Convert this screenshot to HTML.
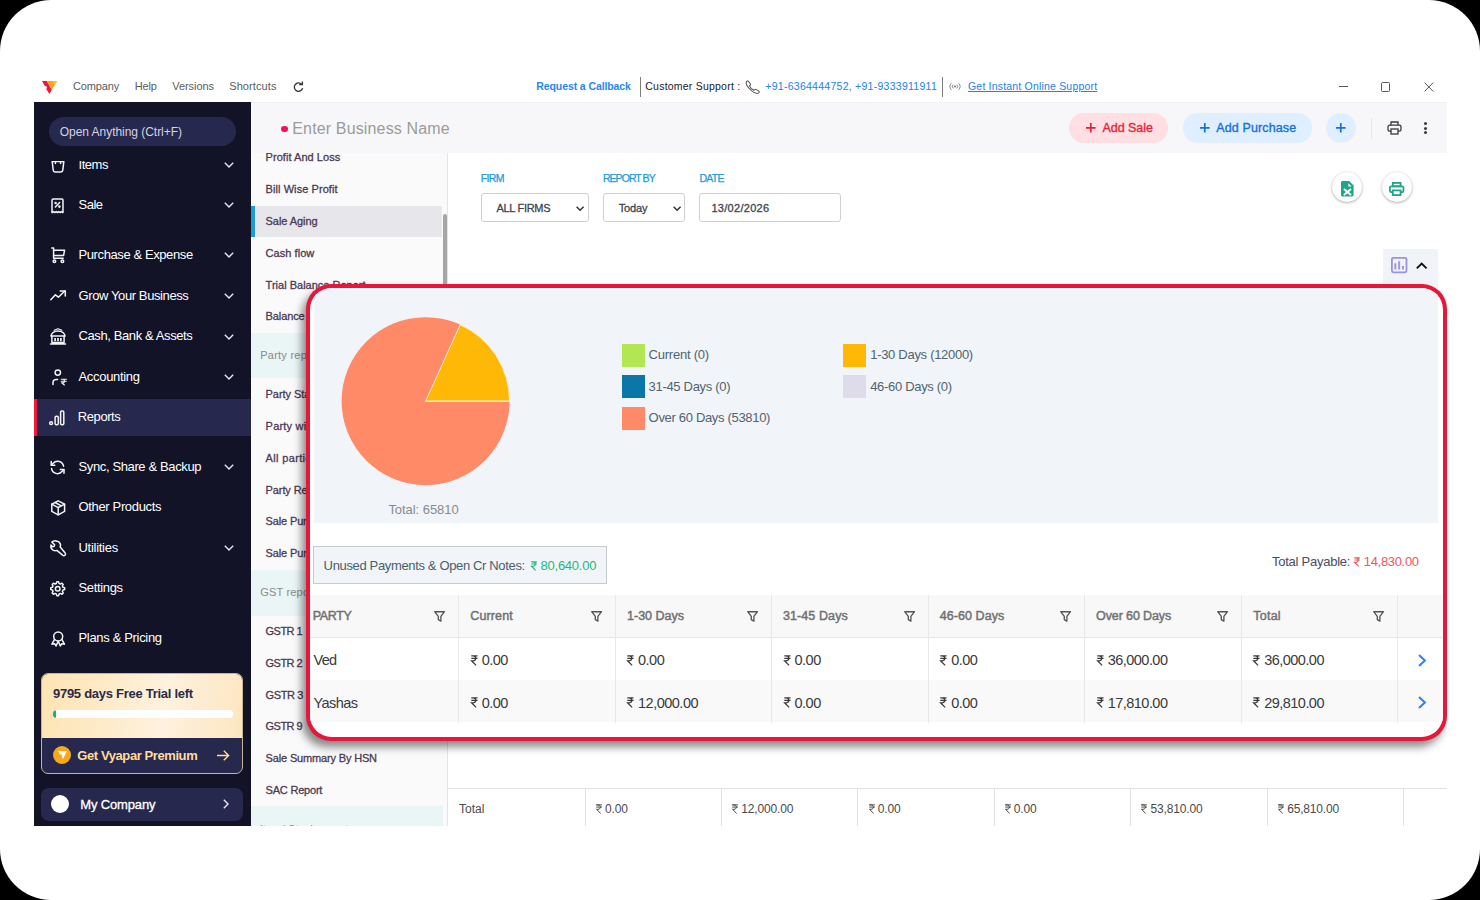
<!DOCTYPE html>
<html><head><meta charset="utf-8"><title>Sale Aging</title>
<style>
*{box-sizing:border-box;margin:0;padding:0}
html,body{width:1480px;height:900px;overflow:hidden;background:#000;font-family:"Liberation Sans",sans-serif;}
#frame{position:absolute;left:0;top:0;width:1480px;height:900px;background:#fff;border-radius:51px;overflow:hidden}
.abs{position:absolute}
.t{position:absolute;white-space:nowrap}
svg{overflow:visible}
</style></head><body>
<div id="frame">
<svg class="abs" style="left:42px;top:80.9px" width="15.1" height="13" viewBox="0 0 15.1 13">
<polygon points="0,0 4.8,0 9.9,8.8 7.5,12.95 4.3,8.3 5.05,5.86 2.85,5.1" fill="#ee1a3c"/>
<polygon points="4.8,0 15.07,0 9.9,8.8" fill="#f7a120"/>
<polygon points="10.6,0 15.07,0 12.4,4.6" fill="#fec516"/>
</svg>
<span class="t" style="left:72.90px;top:78.93px;font-size:11px;line-height:15px;font-weight:400;color:#5c5c5c;letter-spacing:-0.125px;">Company</span>
<span class="t" style="left:134.70px;top:78.93px;font-size:11px;line-height:15px;font-weight:400;color:#5c5c5c;letter-spacing:-0.181px;">Help</span>
<span class="t" style="left:172.30px;top:78.93px;font-size:11px;line-height:15px;font-weight:400;color:#5c5c5c;letter-spacing:-0.061px;">Versions</span>
<span class="t" style="left:229.20px;top:78.93px;font-size:11px;line-height:15px;font-weight:400;color:#5c5c5c;letter-spacing:0.104px;">Shortcuts</span>
<svg class="abs" style="left:293px;top:80.5px" width="11" height="12" viewBox="0 0 11 12" fill="none" stroke="#333" stroke-width="1.3">
<path d="M8.6 3.2A4.2 4.2 0 1 0 9.6 7.2"/><path d="M6.2 3.6H9.4V0.6" stroke-linejoin="miter"/></svg>
<span class="t" style="left:536.30px;top:78.92px;font-size:10.5px;line-height:15px;font-weight:700;color:#2688f0;letter-spacing:-0.099px;">Request a Callback</span>
<div class="abs" style="left:639.8px;top:77px;width:1.3px;height:20px;background:#7d7d7d"></div>
<span class="t" style="left:645.30px;top:78.92px;font-size:10.5px;line-height:15px;font-weight:400;color:#222;letter-spacing:0.220px;">Customer Support :</span>
<svg class="abs" style="left:745.4px;top:79.8px" width="15.6" height="14.4" viewBox="0 0 14 14" preserveAspectRatio="none" fill="none" stroke="#555" stroke-width=".95">
<path d="M1.2 1.8C1.6 1 2.6 .7 3.2 1.4L4.8 3.6C5.2 4.2 5 4.8 4.5 5.2L4 5.7C4.6 7.3 6.4 9.2 8 10L8.6 9.4C9.1 8.9 9.8 8.9 10.3 9.3L12.4 10.9C13 11.5 12.8 12.4 12.1 12.8C10.6 13.7 8.4 13 5.6 10.2C2.4 7 0.6 3.6 1.2 1.8Z"/></svg>
<span class="t" style="left:765.30px;top:78.92px;font-size:10.5px;line-height:15px;font-weight:400;color:#2381ea;letter-spacing:0.267px;">+91-6364444752, +91-9333911911</span>
<div class="abs" style="left:941.8px;top:77px;width:1.3px;height:20px;background:#7d7d7d"></div>
<svg class="abs" style="left:949px;top:82px" width="12" height="9" viewBox="0 0 12 9" fill="none" stroke="#666" stroke-width=".8">
<circle cx="6" cy="4.5" r=".9" fill="#666" stroke="none"/><path d="M4.2 2.6A2.7 2.7 0 0 0 4.2 6.4M7.8 2.6A2.7 2.7 0 0 1 7.8 6.4M2.4 1.2A4.8 4.8 0 0 0 2.4 7.8M9.6 1.2A4.8 4.8 0 0 1 9.6 7.8"/></svg>
<span class="t" style="left:968.00px;top:78.92px;font-size:10.5px;line-height:15px;font-weight:400;color:#2381ea;letter-spacing:0.191px;text-decoration:underline;">Get Instant Online Support</span>
<div class="abs" style="left:1338.5px;top:86px;width:9px;height:1.1px;background:#555"></div>
<div class="abs" style="left:1381px;top:82.2px;width:9.3px;height:9.6px;border:1.1px solid #555;border-radius:1.5px"></div>
<svg class="abs" style="left:1423.5px;top:82px" width="10" height="10" viewBox="0 0 10 10" stroke="#555" stroke-width="1"><path d="M.6 .6L9.2 9.4M9.2 .6L.6 9.4"/></svg>
<div class="abs" style="left:251px;top:102px;width:1196px;height:51px;background:#f7f7f9"></div>
<div class="abs" style="left:251px;top:102px;width:1196px;height:1px;background:#f1f1f4"></div>
<div class="abs" style="left:281.3px;top:125.8px;width:6.6px;height:6.6px;border-radius:50%;background:#f0145a"></div>
<span class="t" style="left:292.30px;top:118.28px;font-size:16px;line-height:22px;font-weight:400;color:#9b9b9b;letter-spacing:0.146px;">Enter Business Name</span>
<div class="abs" style="left:1069.1px;top:113.1px;width:99px;height:29.6px;border-radius:14.8px;background:#ffdfe2"></div>
<svg class="abs" style="left:1086.2px;top:123.1px" width="9.6" height="9.6" viewBox="0 0 9.6 9.6" stroke="#e81e3c" stroke-width="1.7"><path d="M4.8 0V9.6M0 4.8H9.6"/></svg>
<span class="t" style="left:1102.40px;top:118.94px;font-size:12.5px;line-height:18px;font-weight:400;color:#e81e3c;letter-spacing:-0.017px;-webkit-text-stroke:.35px #e81e3c;">Add Sale</span>
<div class="abs" style="left:1182.5px;top:113.1px;width:129.2px;height:29.6px;border-radius:14.8px;background:#e0efff"></div>
<svg class="abs" style="left:1200.2px;top:123.1px" width="9.6" height="9.6" viewBox="0 0 9.6 9.6" stroke="#1570e0" stroke-width="1.7"><path d="M4.8 0V9.6M0 4.8H9.6"/></svg>
<span class="t" style="left:1216.30px;top:118.94px;font-size:12.5px;line-height:18px;font-weight:400;color:#1570e0;letter-spacing:0.115px;-webkit-text-stroke:.35px #1570e0;">Add Purchase</span>
<div class="abs" style="left:1326px;top:113px;width:30px;height:30px;border-radius:50%;background:#e0efff"></div>
<svg class="abs" style="left:1336.2px;top:123.1px" width="9.6" height="9.6" viewBox="0 0 9.6 9.6" stroke="#1570e0" stroke-width="1.7"><path d="M4.8 0V9.6M0 4.8H9.6"/></svg>
<div class="abs" style="left:1370.5px;top:118px;width:1px;height:21px;background:#e6e6ea"></div>
<svg class="abs" style="left:1387px;top:120.5px" width="15" height="14" viewBox="0 0 15 14" fill="none" stroke="#3a3a3a" stroke-width="1.3">
<path d="M4 4.2V1H11V4.2"/><rect x="1" y="4.2" width="13" height="6" rx="1.6"/><rect x="4" y="8" width="7" height="5" fill="#f7f7f9"/></svg>
<div class="abs" style="left:1424.3px;top:121.9px;width:3.1px;height:3.1px;border-radius:50%;background:#3a3a3a"></div>
<div class="abs" style="left:1424.3px;top:126.6px;width:3.1px;height:3.1px;border-radius:50%;background:#3a3a3a"></div>
<div class="abs" style="left:1424.3px;top:131.3px;width:3.1px;height:3.1px;border-radius:50%;background:#3a3a3a"></div>
<div class="abs" style="left:34px;top:102px;width:217px;height:724px;background:#131327"></div>
<div class="abs" style="left:49px;top:117px;width:187px;height:29px;border-radius:14.5px;background:#27284d"></div>
<span class="t" style="left:59.80px;top:123.74px;font-size:12px;line-height:17px;font-weight:400;color:#d4d4e2;letter-spacing:-0.042px;">Open Anything (Ctrl+F)</span>
<div class="abs" style="left:34px;top:160.6px;width:217px;height:500px;overflow:hidden"><div class="abs" style="left:-34px;top:-160.6px;width:300px;height:700px">
<div class="abs" style="left:34px;top:399px;width:217px;height:36.8px;background:#27284d"></div>
<div class="abs" style="left:34px;top:399px;width:3px;height:36.8px;background:#ed1a3b"></div>
<span class="t" style="left:78.50px;top:155.95px;font-size:13px;line-height:18px;font-weight:400;color:#ffffff;letter-spacing:-0.457px;">Items</span>
<svg class="abs" style="left:224px;top:162.30px" width="10" height="6" viewBox="0 0 10 6" fill="none" stroke="#e8e8f0" stroke-width="1.4"><path d="M.8 .7L5 4.9L9.2 .7"/></svg>
<span class="t" style="left:78.50px;top:195.75px;font-size:13px;line-height:18px;font-weight:400;color:#ffffff;letter-spacing:-0.505px;">Sale</span>
<svg class="abs" style="left:224px;top:202.10px" width="10" height="6" viewBox="0 0 10 6" fill="none" stroke="#e8e8f0" stroke-width="1.4"><path d="M.8 .7L5 4.9L9.2 .7"/></svg>
<span class="t" style="left:78.50px;top:246.05px;font-size:13px;line-height:18px;font-weight:400;color:#ffffff;letter-spacing:-0.400px;">Purchase &amp; Expense</span>
<svg class="abs" style="left:224px;top:252.40px" width="10" height="6" viewBox="0 0 10 6" fill="none" stroke="#e8e8f0" stroke-width="1.4"><path d="M.8 .7L5 4.9L9.2 .7"/></svg>
<span class="t" style="left:78.50px;top:286.85px;font-size:13px;line-height:18px;font-weight:400;color:#ffffff;letter-spacing:-0.394px;">Grow Your Business</span>
<svg class="abs" style="left:224px;top:293.20px" width="10" height="6" viewBox="0 0 10 6" fill="none" stroke="#e8e8f0" stroke-width="1.4"><path d="M.8 .7L5 4.9L9.2 .7"/></svg>
<span class="t" style="left:78.50px;top:327.15px;font-size:13px;line-height:18px;font-weight:400;color:#ffffff;letter-spacing:-0.395px;">Cash, Bank &amp; Assets</span>
<svg class="abs" style="left:224px;top:333.50px" width="10" height="6" viewBox="0 0 10 6" fill="none" stroke="#e8e8f0" stroke-width="1.4"><path d="M.8 .7L5 4.9L9.2 .7"/></svg>
<span class="t" style="left:78.50px;top:367.75px;font-size:13px;line-height:18px;font-weight:400;color:#ffffff;letter-spacing:-0.312px;">Accounting</span>
<svg class="abs" style="left:224px;top:374.10px" width="10" height="6" viewBox="0 0 10 6" fill="none" stroke="#e8e8f0" stroke-width="1.4"><path d="M.8 .7L5 4.9L9.2 .7"/></svg>
<span class="t" style="left:77.80px;top:408.15px;font-size:13px;line-height:18px;font-weight:400;color:#ffffff;letter-spacing:-0.417px;">Reports</span>
<span class="t" style="left:78.50px;top:457.65px;font-size:13px;line-height:18px;font-weight:400;color:#ffffff;letter-spacing:-0.373px;">Sync, Share &amp; Backup</span>
<svg class="abs" style="left:224px;top:464.00px" width="10" height="6" viewBox="0 0 10 6" fill="none" stroke="#e8e8f0" stroke-width="1.4"><path d="M.8 .7L5 4.9L9.2 .7"/></svg>
<span class="t" style="left:78.50px;top:498.15px;font-size:13px;line-height:18px;font-weight:400;color:#ffffff;letter-spacing:-0.345px;">Other Products</span>
<span class="t" style="left:78.50px;top:538.85px;font-size:13px;line-height:18px;font-weight:400;color:#ffffff;letter-spacing:-0.277px;">Utilities</span>
<svg class="abs" style="left:224px;top:545.20px" width="10" height="6" viewBox="0 0 10 6" fill="none" stroke="#e8e8f0" stroke-width="1.4"><path d="M.8 .7L5 4.9L9.2 .7"/></svg>
<span class="t" style="left:78.50px;top:579.15px;font-size:13px;line-height:18px;font-weight:400;color:#ffffff;letter-spacing:-0.347px;">Settings</span>
<span class="t" style="left:78.50px;top:629.45px;font-size:13px;line-height:18px;font-weight:400;color:#ffffff;letter-spacing:-0.330px;">Plans &amp; Pricing</span>
<svg class="abs" style="left:50.9px;top:159px" width="14" height="14" viewBox="0 0 14 14" fill="none" stroke="#f4f4f8" stroke-width="1.5" stroke-linejoin="round" stroke-linecap="round"><path d="M1.2 2.6H12.8L11.8 11.2C11.7 12.2 11 12.9 10 12.9H4C3 12.9 2.3 12.2 2.2 11.2Z"/><path d="M4.4 2.6V4.4M9.6 2.6V4.4"/></svg>
<svg class="abs" style="left:51.3px;top:197.6px" width="13" height="16" viewBox="0 0 13 16" fill="none" stroke="#f4f4f8" stroke-width="1.5" stroke-linejoin="round" stroke-linecap="round"><path d="M1 14.6V2.2C1 1.5 1.5 1 2.2 1H10.8C11.5 1 12 1.5 12 2.2V14.6L10.6 13.6L9.2 14.6L7.8 13.6L6.5 14.6L5.2 13.6L3.8 14.6L2.4 13.6Z"/><path d="M4.4 9L8.6 4.6" /><circle cx="4.6" cy="5" r=".55" fill="#f4f4f8"/><circle cx="8.4" cy="8.6" r=".55" fill="#f4f4f8"/></svg>
<svg class="abs" style="left:50.6px;top:246.6px" width="15" height="16.5" viewBox="0 0 15 16.5" fill="none" stroke="#f4f4f8" stroke-width="1.5" stroke-linejoin="round" stroke-linecap="round"><path d="M.8 .9H2.6V11.2H12.2"/><path d="M2.6 3.2H13.6L12.6 8.4H2.6"/><circle cx="3.4" cy="14.2" r="1.3"/><circle cx="11.4" cy="14.2" r="1.3"/></svg>
<svg class="abs" style="left:50px;top:290.2px" width="16.2" height="10.5" viewBox="0 0 16.2 10.5" fill="none" stroke="#f4f4f8" stroke-width="1.5" stroke-linejoin="round" stroke-linecap="round"><path d="M.8 9.7L5.4 4.8L8.4 7.2L14.8 1"/><path d="M10.2 .9H15.3V6"/></svg>
<svg class="abs" style="left:50px;top:327.6px" width="16" height="16.5" viewBox="0 0 16 16.5" fill="none" stroke="#f4f4f8" stroke-width="1.5" stroke-linejoin="round" stroke-linecap="round"><path d="M4.2 2.3L8 .8L11.8 2.3" stroke-width="1.2"/><path d="M.9 8.1C1.4 5 4.4 2.9 8 2.9C11.6 2.9 14.6 5 15.1 8.1Z"/><path d="M1.9 8.3V14.5H14.1V8.3M.5 16H15.5"/><path d="M5.1 10V13.2M8 10V13.2M10.9 10V13.2" stroke-width="1.7" stroke-linecap="butt"/></svg>
<svg class="abs" style="left:52px;top:368.6px" width="15" height="16.5" viewBox="0 0 15 16.5" fill="none" stroke="#f4f4f8" stroke-width="1.5" stroke-linejoin="round" stroke-linecap="round"><circle cx="5.8" cy="3.6" r="2.7"/><path d="M1 15.4V13.6C1 11.8 2.4 10.6 4.4 10.6H5.6"/><path d="M9.2 10.2H14.4M9.2 12.2H14.4M9.2 10.2H10.8C12.1 10.2 12.5 11.2 12.5 12.2C12.5 13.2 11.8 13.8 10.8 13.8H9.6L12.4 16" stroke-width="1.15"/></svg>
<svg class="abs" style="left:49.4px;top:409.6px" width="16" height="16" viewBox="0 0 16 16" fill="none" stroke="#f4f4f8" stroke-width="1.5" stroke-linejoin="round" stroke-linecap="round"><circle cx="2.1" cy="13.2" r="1.4"/><rect x="6.1" y="6.2" width="3.2" height="8.6" rx="1.2"/><rect x="11.6" y="1" width="3.2" height="13.8" rx="1.2"/></svg>
<svg class="abs" style="left:50.4px;top:459.6px" width="15.2" height="14.8" viewBox="0 0 15.2 14.8" fill="none" stroke="#f4f4f8" stroke-width="1.5" stroke-linejoin="round" stroke-linecap="round"><path d="M13.6 6.2A6 6 0 0 0 3.2 3.2L1.4 5M1.6 8.6A6 6 0 0 0 12 11.6L13.8 9.8"/><path d="M1.2 1.6V5.2H4.8M14 13.2V9.6H10.4"/></svg>
<svg class="abs" style="left:50.8px;top:500px" width="14.4" height="15.6" viewBox="0 0 14.4 15.6" fill="none" stroke="#f4f4f8" stroke-width="1.5" stroke-linejoin="round" stroke-linecap="round"><path d="M7.2 .8L13.6 4.2V11.4L7.2 14.8L.8 11.4V4.2Z"/><path d="M.8 4.2L7.2 7.6L13.6 4.2M7.2 7.6V14.8M4 2.5L10.4 5.9"/></svg>
<svg class="abs" style="left:49.8px;top:540px" width="16.4" height="16.4" viewBox="0 0 16.4 16.4" fill="none" stroke="#f4f4f8" stroke-width="1.5" stroke-linejoin="round" stroke-linecap="round"><path d="M7.2 1.2C5.4 .4 3.2 .8 1.9 2.1L4.6 4.8L4.2 6.4L2.6 6.8L.9 5.1C.5 6.9 1 8.4 2.1 9.5C3.4 10.8 5.2 11 6.8 10.4L12.6 15.2C13.4 15.9 14.4 15.8 15 15.2C15.6 14.6 15.7 13.6 15 12.8L10.2 7C10.8 5.4 10.4 3.4 9.2 2.2C8.6 1.7 7.9 1.4 7.2 1.2Z"/></svg>
<svg class="abs" style="left:50.2px;top:581.2px" width="15.4" height="15.4" viewBox="0 0 15.4 15.4" fill="none" stroke="#f4f4f8" stroke-width="1.5" stroke-linejoin="round" stroke-linecap="round"><polygon points="6.82,0.76 8.58,0.76 9.12,2.49 10.38,3.01 11.99,2.17 13.23,3.41 12.39,5.02 12.91,6.28 14.64,6.82 14.64,8.58 12.91,9.12 12.39,10.38 13.23,11.99 11.99,13.23 10.38,12.39 9.12,12.91 8.58,14.64 6.82,14.64 6.28,12.91 5.02,12.39 3.41,13.23 2.17,11.99 3.01,10.38 2.49,9.12 0.76,8.58 0.76,6.82 2.49,6.28 3.01,5.02 2.17,3.41 3.41,2.17 5.02,3.01 6.28,2.49"/><circle cx="7.7" cy="7.7" r="2.3"/></svg>
<svg class="abs" style="left:50.8px;top:630.6px" width="14.4" height="15.6" viewBox="0 0 14.4 15.6" fill="none" stroke="#f4f4f8" stroke-width="1.5" stroke-linejoin="round" stroke-linecap="round"><circle cx="7.2" cy="5.4" r="4.5"/><path d="M3.6 8.4L.9 13.2L3.8 12.8L5 15L7.2 10.4M10.8 8.4L13.5 13.2L10.6 12.8L9.4 15L7.2 10.4"/></svg>
</div></div>
<div class="abs" style="left:40.9px;top:673.3px;width:202.4px;height:101px;border-radius:7px;background:#27284d;overflow:hidden;border:1px solid #c9b68e"><div class="abs" style="left:-1px;top:-1px;width:203px;height:64.3px;background:linear-gradient(100deg,#fde4b2 0%,#fdeac6 30%,#fef1de 60%,#fde6c0 100%)"></div></div>
<span class="t" style="left:53.00px;top:685.25px;font-size:13px;line-height:18px;font-weight:700;color:#2a2a48;letter-spacing:-0.276px;">9795 days Free Trial left</span>
<div class="abs" style="left:52.5px;top:710.4px;width:180px;height:7.2px;border-radius:3.6px;background:#fff;overflow:hidden"><div class="abs" style="left:0;top:0;width:3.6px;height:7.2px;border-radius:1.8px;background:#18b368"></div></div>
<div class="abs" style="left:53px;top:746px;width:18px;height:18px;border-radius:50%;background:#f7a81c"></div>
<svg class="abs" style="left:57.6px;top:751.4px" width="9" height="8" viewBox="0 0 9 8"><polygon points="0,0 9,0 5,8 3.6,5.2 4.6,3.6 2,3.4" fill="#fff"/></svg>
<span class="t" style="left:77.30px;top:747.05px;font-size:13px;line-height:18px;font-weight:700;color:#ffdc9c;letter-spacing:-0.411px;">Get Vyapar Premium</span>
<svg class="abs" style="left:216.5px;top:749.6px" width="12.5" height="11" viewBox="0 0 12.5 11" fill="none" stroke="#ffdc9c" stroke-width="1.4"><path d="M0 5.5H11.5M6.8 .8L11.6 5.5L6.8 10.2"/></svg>
<div class="abs" style="left:41.1px;top:787.8px;width:202.2px;height:33.2px;border-radius:8px;background:#27284d"></div>
<div class="abs" style="left:51.2px;top:795.4px;width:18px;height:18px;border-radius:50%;background:#fff"></div>
<span class="t" style="left:80.30px;top:795.95px;font-size:13px;line-height:18px;font-weight:400;color:#fff;letter-spacing:-0.158px;-webkit-text-stroke:.3px #fff;">My Company</span>
<svg class="abs" style="left:223px;top:799.4px" width="6" height="10" viewBox="0 0 6 10" fill="none" stroke="#e8e8f0" stroke-width="1.4"><path d="M.8 .8L5 5L.8 9.2"/></svg>
<div class="abs" style="left:251px;top:153px;width:196.5px;height:673px;background:#fafafa;overflow:hidden">
<div class="abs" style="left:-251px;top:-153px;width:600px;height:900px">
<div class="abs" style="left:251px;top:206px;width:191.3px;height:31.4px;background:#e6e6eb"></div>
<div class="abs" style="left:251px;top:206px;width:3.8px;height:31.4px;background:#1e9ad6"></div>
<div class="abs" style="left:251px;top:332.7px;width:192px;height:45.7px;background:#eaf5f5"></div>
<div class="abs" style="left:251px;top:569.5px;width:192px;height:46.1px;background:#eaf5f5"></div>
<div class="abs" style="left:251px;top:806.2px;width:192px;height:23.8px;background:#eaf5f5"></div>
<span class="t" style="left:265.60px;top:150.33px;font-size:11px;line-height:15px;font-weight:400;color:#4b3a52;letter-spacing:0.047px;-webkit-text-stroke:.3px #4b3a52;">Profit And Loss</span>
<span class="t" style="left:265.60px;top:182.43px;font-size:11px;line-height:15px;font-weight:400;color:#4b3a52;letter-spacing:0.069px;-webkit-text-stroke:.3px #4b3a52;">Bill Wise Profit</span>
<span class="t" style="left:265.60px;top:214.23px;font-size:11px;line-height:15px;font-weight:400;color:#4b3a52;letter-spacing:-0.061px;-webkit-text-stroke:.3px #4b3a52;">Sale Aging</span>
<span class="t" style="left:265.60px;top:246.03px;font-size:11px;line-height:15px;font-weight:400;color:#4b3a52;letter-spacing:0.045px;-webkit-text-stroke:.3px #4b3a52;">Cash flow</span>
<span class="t" style="left:265.60px;top:277.73px;font-size:11px;line-height:15px;font-weight:400;color:#4b3a52;letter-spacing:0.007px;-webkit-text-stroke:.3px #4b3a52;">Trial Balance Report</span>
<span class="t" style="left:265.60px;top:309.03px;font-size:11px;line-height:15px;font-weight:400;color:#4b3a52;letter-spacing:-0.120px;-webkit-text-stroke:.3px #4b3a52;">Balance Sheet</span>
<span class="t" style="left:265.60px;top:387.33px;font-size:11px;line-height:15px;font-weight:400;color:#4b3a52;letter-spacing:-0.058px;-webkit-text-stroke:.3px #4b3a52;">Party Statement</span>
<span class="t" style="left:265.60px;top:419.03px;font-size:11px;line-height:15px;font-weight:400;color:#4b3a52;letter-spacing:0.202px;-webkit-text-stroke:.3px #4b3a52;">Party wise Profit &amp; Loss</span>
<span class="t" style="left:265.60px;top:450.83px;font-size:11px;line-height:15px;font-weight:400;color:#4b3a52;letter-spacing:0.337px;-webkit-text-stroke:.3px #4b3a52;">All parties</span>
<span class="t" style="left:265.60px;top:482.63px;font-size:11px;line-height:15px;font-weight:400;color:#4b3a52;letter-spacing:-0.104px;-webkit-text-stroke:.3px #4b3a52;">Party Report By Item</span>
<span class="t" style="left:265.60px;top:514.03px;font-size:11px;line-height:15px;font-weight:400;color:#4b3a52;letter-spacing:-0.144px;-webkit-text-stroke:.3px #4b3a52;">Sale Purchase By Party</span>
<span class="t" style="left:265.60px;top:545.83px;font-size:11px;line-height:15px;font-weight:400;color:#4b3a52;letter-spacing:-0.136px;-webkit-text-stroke:.3px #4b3a52;">Sale Purchase By Party Group</span>
<span class="t" style="left:265.60px;top:624.23px;font-size:11px;line-height:15px;font-weight:400;color:#4b3a52;letter-spacing:-0.538px;-webkit-text-stroke:.3px #4b3a52;">GSTR 1</span>
<span class="t" style="left:265.60px;top:656.03px;font-size:11px;line-height:15px;font-weight:400;color:#4b3a52;letter-spacing:-0.538px;-webkit-text-stroke:.3px #4b3a52;">GSTR 2</span>
<span class="t" style="left:265.60px;top:687.73px;font-size:11px;line-height:15px;font-weight:400;color:#4b3a52;letter-spacing:-0.390px;-webkit-text-stroke:.3px #4b3a52;">GSTR 3 B</span>
<span class="t" style="left:265.60px;top:719.23px;font-size:11px;line-height:15px;font-weight:400;color:#4b3a52;letter-spacing:-0.538px;-webkit-text-stroke:.3px #4b3a52;">GSTR 9</span>
<span class="t" style="left:265.60px;top:751.03px;font-size:11px;line-height:15px;font-weight:400;color:#4b3a52;letter-spacing:-0.158px;-webkit-text-stroke:.3px #4b3a52;">Sale Summary By HSN</span>
<span class="t" style="left:265.60px;top:782.73px;font-size:11px;line-height:15px;font-weight:400;color:#4b3a52;letter-spacing:-0.209px;-webkit-text-stroke:.3px #4b3a52;">SAC Report</span>
<span class="t" style="left:260.20px;top:347.63px;font-size:11px;line-height:15px;font-weight:400;color:#8a8a8a;letter-spacing:0.253px;">Party report</span>
<span class="t" style="left:260.20px;top:584.83px;font-size:11px;line-height:15px;font-weight:400;color:#8a8a8a;letter-spacing:0.191px;">GST reports</span>
<span class="t" style="left:260.20px;top:822.13px;font-size:11px;line-height:15px;font-weight:400;color:#8a8a8a;letter-spacing:0.066px;">Item/ Stock report</span>
</div></div>
<div class="abs" style="left:447.3px;top:153px;width:1px;height:673px;background:#e4e4e8"></div>
<div class="abs" style="left:442.6px;top:214px;width:4.9px;height:330px;border-radius:2.4px;background:#a6a6a6"></div>
<span class="t" style="left:480.70px;top:171.02px;font-size:10.5px;line-height:15px;font-weight:400;color:#1e9ad6;letter-spacing:-0.615px;-webkit-text-stroke:.25px #1e9ad6;">FIRM</span>
<span class="t" style="left:602.90px;top:171.02px;font-size:10.5px;line-height:15px;font-weight:400;color:#1e9ad6;letter-spacing:-0.943px;-webkit-text-stroke:.25px #1e9ad6;">REPORT BY</span>
<span class="t" style="left:699.50px;top:171.02px;font-size:10.5px;line-height:15px;font-weight:400;color:#1e9ad6;letter-spacing:-0.781px;-webkit-text-stroke:.25px #1e9ad6;">DATE</span>
<div class="abs" style="left:481px;top:193px;width:107.6px;height:28.6px;border:1px solid #cfcfd4;border-radius:3px;background:#fff"></div>
<div class="abs" style="left:603.2px;top:193px;width:82.3px;height:28.6px;border:1px solid #cfcfd4;border-radius:3px;background:#fff"></div>
<div class="abs" style="left:699.2px;top:193px;width:141.5px;height:28.6px;border:1px solid #cfcfd4;border-radius:3px;background:#fff"></div>
<span class="t" style="left:496.50px;top:201.13px;font-size:11px;line-height:15px;font-weight:400;color:#3c4650;letter-spacing:-0.305px;-webkit-text-stroke:.3px #3c4650;">ALL FIRMS</span>
<span class="t" style="left:618.70px;top:201.13px;font-size:11px;line-height:15px;font-weight:400;color:#3c4650;letter-spacing:-0.111px;-webkit-text-stroke:.3px #3c4650;">Today</span>
<span class="t" style="left:711.40px;top:200.73px;font-size:11px;line-height:15px;font-weight:400;color:#3c4650;letter-spacing:0.295px;-webkit-text-stroke:.3px #3c4650;">13/02/2026</span>
<svg class="abs" style="left:576.1px;top:205.6px" width="8.2" height="5.4" viewBox="0 0 8.2 5.4" fill="none" stroke="#333" stroke-width="1.5"><path d="M.6 .7L4.1 4.2L7.6 .7"/></svg>
<svg class="abs" style="left:672.8px;top:205.6px" width="8.2" height="5.4" viewBox="0 0 8.2 5.4" fill="none" stroke="#333" stroke-width="1.5"><path d="M.6 .7L4.1 4.2L7.6 .7"/></svg>
<div class="abs" style="left:1331.8px;top:171.8px;width:30.6px;height:30.6px;border-radius:50%;background:#fff;box-shadow:0 1px 3px rgba(0,0,0,.3),0 0 1px rgba(0,0,0,.12)"></div>
<div class="abs" style="left:1381.7px;top:171.8px;width:30.6px;height:30.6px;border-radius:50%;background:#fff;box-shadow:0 1px 3px rgba(0,0,0,.3),0 0 1px rgba(0,0,0,.12)"></div>
<svg class="abs" style="left:1341px;top:180.7px" width="12.6" height="15.6" viewBox="0 0 12.6 15.6"><path d="M1.5 0H8.2L12.6 4.4V14.1C12.6 14.9 11.9 15.6 11.1 15.6H1.5C.7 15.6 0 14.9 0 14.1V1.5C0 .7 .7 0 1.5 0Z" fill="#1fa58a"/><path d="M7.4 2.2V5.4H10.6Z" fill="#fff"/><path d="M2.9 7.9L10 14M10 7.9L2.9 14" stroke="#fff" stroke-width="2" fill="none"/></svg>
<svg class="abs" style="left:1389.2px;top:181.7px" width="15.4" height="14" viewBox="0 0 15.4 14" fill="none" stroke="#1fa58a" stroke-width="1.8"><rect x="3.8" y=".9" width="7.8" height="3.4"/><rect x=".9" y="4.3" width="13.6" height="5.9" rx="1.4"/><rect x="3.8" y="8.4" width="7.8" height="4.7" fill="#fff"/></svg>
<div class="abs" style="left:1383.1px;top:248.8px;width:55.3px;height:40px;background:#f0f4f8"></div>
<svg class="abs" style="left:1391.2px;top:257.1px" width="16.4" height="16.4" viewBox="0 0 16.4 16.4" fill="none" stroke="#9a93de" stroke-width="1.8"><rect x=".9" y=".9" width="14.6" height="14.4" rx="1.6"/><path d="M4.4 6.2V12.6M8.2 4.2V12.6M12 9V12.6" stroke-width="1.9"/></svg>
<svg class="abs" style="left:1416px;top:262px" width="11.4" height="7.4" viewBox="0 0 11.4 7.4" fill="none" stroke="#111" stroke-width="1.9"><path d="M.8 6.4L5.7 1.5L10.6 6.4"/></svg>
<div class="abs" style="left:448px;top:788.2px;width:999px;height:1px;background:#e2e2e4"></div>
<div class="abs" style="left:584.8px;top:788.2px;width:1px;height:38px;background:#e2e2e4"></div>
<div class="abs" style="left:721px;top:788.2px;width:1px;height:38px;background:#e2e2e4"></div>
<div class="abs" style="left:856.8px;top:788.2px;width:1px;height:38px;background:#e2e2e4"></div>
<div class="abs" style="left:993.5px;top:788.2px;width:1px;height:38px;background:#e2e2e4"></div>
<div class="abs" style="left:1129.9px;top:788.2px;width:1px;height:38px;background:#e2e2e4"></div>
<div class="abs" style="left:1266.6px;top:788.2px;width:1px;height:38px;background:#e2e2e4"></div>
<div class="abs" style="left:1402.9px;top:788.2px;width:1px;height:38px;background:#e2e2e4"></div>
<span class="t" style="left:458.90px;top:801.04px;font-size:12px;line-height:17px;font-weight:400;color:#4a4a4a;letter-spacing:0.070px;">Total</span>
<svg class="abs" style="left:595.90px;top:803.87px" width="6.10" height="10.05" viewBox="0.4 0.5 8.8 13.4" fill="none" stroke="#4a4a4a" stroke-width="1.43983" stroke-linecap="butt" stroke-linejoin="miter"><path d="M0.8 1.2H9M0.8 4.4H9M0.8 1.2H3.4C5.6 1.2 6.7 2.7 6.7 4.4C6.7 6.2 5.5 7.6 3.4 7.6H1.1L7.2 13.6"/></svg><span class="t" style="left:605.04px;top:801.04px;font-size:12px;line-height:17px;font-weight:400;color:#4a4a4a;letter-spacing:-0.175px;">0.00</span>
<svg class="abs" style="left:732.10px;top:803.87px" width="6.10" height="10.05" viewBox="0.4 0.5 8.8 13.4" fill="none" stroke="#4a4a4a" stroke-width="1.43983" stroke-linecap="butt" stroke-linejoin="miter"><path d="M0.8 1.2H9M0.8 4.4H9M0.8 1.2H3.4C5.6 1.2 6.7 2.7 6.7 4.4C6.7 6.2 5.5 7.6 3.4 7.6H1.1L7.2 13.6"/></svg><span class="t" style="left:741.24px;top:801.04px;font-size:12px;line-height:17px;font-weight:400;color:#4a4a4a;letter-spacing:-0.136px;">12,000.00</span>
<svg class="abs" style="left:868.70px;top:803.87px" width="6.10" height="10.05" viewBox="0.4 0.5 8.8 13.4" fill="none" stroke="#4a4a4a" stroke-width="1.43983" stroke-linecap="butt" stroke-linejoin="miter"><path d="M0.8 1.2H9M0.8 4.4H9M0.8 1.2H3.4C5.6 1.2 6.7 2.7 6.7 4.4C6.7 6.2 5.5 7.6 3.4 7.6H1.1L7.2 13.6"/></svg><span class="t" style="left:877.84px;top:801.04px;font-size:12px;line-height:17px;font-weight:400;color:#4a4a4a;letter-spacing:-0.175px;">0.00</span>
<svg class="abs" style="left:1004.60px;top:803.87px" width="6.10" height="10.05" viewBox="0.4 0.5 8.8 13.4" fill="none" stroke="#4a4a4a" stroke-width="1.43983" stroke-linecap="butt" stroke-linejoin="miter"><path d="M0.8 1.2H9M0.8 4.4H9M0.8 1.2H3.4C5.6 1.2 6.7 2.7 6.7 4.4C6.7 6.2 5.5 7.6 3.4 7.6H1.1L7.2 13.6"/></svg><span class="t" style="left:1013.74px;top:801.04px;font-size:12px;line-height:17px;font-weight:400;color:#4a4a4a;letter-spacing:-0.175px;">0.00</span>
<svg class="abs" style="left:1141.30px;top:803.87px" width="6.10" height="10.05" viewBox="0.4 0.5 8.8 13.4" fill="none" stroke="#4a4a4a" stroke-width="1.43983" stroke-linecap="butt" stroke-linejoin="miter"><path d="M0.8 1.2H9M0.8 4.4H9M0.8 1.2H3.4C5.6 1.2 6.7 2.7 6.7 4.4C6.7 6.2 5.5 7.6 3.4 7.6H1.1L7.2 13.6"/></svg><span class="t" style="left:1150.44px;top:801.04px;font-size:12px;line-height:17px;font-weight:400;color:#4a4a4a;letter-spacing:-0.148px;">53,810.00</span>
<svg class="abs" style="left:1278.00px;top:803.87px" width="6.10" height="10.05" viewBox="0.4 0.5 8.8 13.4" fill="none" stroke="#4a4a4a" stroke-width="1.43983" stroke-linecap="butt" stroke-linejoin="miter"><path d="M0.8 1.2H9M0.8 4.4H9M0.8 1.2H3.4C5.6 1.2 6.7 2.7 6.7 4.4C6.7 6.2 5.5 7.6 3.4 7.6H1.1L7.2 13.6"/></svg><span class="t" style="left:1287.14px;top:801.04px;font-size:12px;line-height:17px;font-weight:400;color:#4a4a4a;letter-spacing:-0.170px;">65,810.00</span>
<div class="abs" style="left:0;top:0;width:1447px;height:900px;overflow:hidden"><div class="abs" style="left:306px;top:284.4px;width:1141px;height:456.2px;border-radius:25px;background:#e8173a;box-shadow:-4px 6px 8px rgba(0,0,0,.46)"></div></div>
<div class="abs" style="left:309.6px;top:288px;width:1133.8px;height:449px;border-radius:21.5px;background:#fff;overflow:hidden">
<div class="abs" style="left:-309.6px;top:-288px;width:1480px;height:900px">
<div class="abs" style="left:314.3px;top:287px;width:1124px;height:235.6px;background:#f1f5f9"></div>
<svg class="abs" style="left:0;top:0" width="1480" height="900" viewBox="0 0 1480 900"><circle cx="425.6" cy="401.2" r="84" fill="#ff8a68"/><path d="M425.6 401.2 L509.6 401.2 A84 84 0 0 0 460.24 324.68 Z" fill="#ffb806" stroke="#fff" stroke-width=".8" stroke-linejoin="round"/><path d="M425.6 401.2 H509.6" stroke="#fff" stroke-width=".8"/></svg>
<span class="t" style="left:388.40px;top:501.15px;font-size:13px;line-height:18px;font-weight:400;color:#8a8a8a;letter-spacing:-0.053px;">Total: 65810</span>
<div class="abs" style="left:621.6px;top:343.6px;width:23px;height:23px;background:#b3e653"></div>
<span class="t" style="left:648.60px;top:345.95px;font-size:13px;line-height:18px;font-weight:400;color:#50636e;letter-spacing:-0.232px;">Current (0)</span>
<div class="abs" style="left:621.6px;top:375.2px;width:23px;height:23px;background:#0b77a8"></div>
<span class="t" style="left:648.60px;top:377.55px;font-size:13px;line-height:18px;font-weight:400;color:#50636e;letter-spacing:-0.313px;">31-45 Days (0)</span>
<div class="abs" style="left:621.6px;top:406.9px;width:23px;height:23px;background:#ff8a68"></div>
<span class="t" style="left:648.60px;top:409.25px;font-size:13px;line-height:18px;font-weight:400;color:#50636e;letter-spacing:-0.320px;">Over 60 Days (53810)</span>
<div class="abs" style="left:843.2px;top:343.6px;width:23px;height:23px;background:#ffb806"></div>
<span class="t" style="left:870.20px;top:345.95px;font-size:13px;line-height:18px;font-weight:400;color:#50636e;letter-spacing:-0.292px;">1-30 Days (12000)</span>
<div class="abs" style="left:843.2px;top:375.2px;width:23px;height:23px;background:#dedcea"></div>
<span class="t" style="left:870.20px;top:377.55px;font-size:13px;line-height:18px;font-weight:400;color:#50636e;letter-spacing:-0.313px;">46-60 Days (0)</span>
<div class="abs" style="left:312.8px;top:546px;width:294px;height:37.6px;background:#f1f5f9;border:1px solid #c6cbd0"></div>
<span class="t" style="left:323.60px;top:556.85px;font-size:13px;line-height:18px;font-weight:400;color:#48606a;letter-spacing:-0.351px;">Unused Payments &amp; Open Cr Notes:</span>
<svg class="abs" style="left:530.70px;top:560.75px" width="6.01" height="9.91" viewBox="0.4 0.5 8.8 13.4" fill="none" stroke="#1fb87a" stroke-width="1.58236" stroke-linecap="butt" stroke-linejoin="miter"><path d="M0.8 1.2H9M0.8 4.4H9M0.8 1.2H3.4C5.6 1.2 6.7 2.7 6.7 4.4C6.7 6.2 5.5 7.6 3.4 7.6H1.1L7.2 13.6"/></svg><span class="t" style="left:540.61px;top:556.85px;font-size:13px;line-height:18px;font-weight:400;color:#1fb87a;letter-spacing:-0.260px;">80,640.00</span>
<span class="t" style="left:1272.00px;top:553.15px;font-size:13px;line-height:18px;font-weight:400;color:#4b4b5c;letter-spacing:-0.247px;">Total Payable:</span>
<svg class="abs" style="left:1353.90px;top:557.05px" width="6.01" height="9.91" viewBox="0.4 0.5 8.8 13.4" fill="none" stroke="#e9585c" stroke-width="1.58236" stroke-linecap="butt" stroke-linejoin="miter"><path d="M0.8 1.2H9M0.8 4.4H9M0.8 1.2H3.4C5.6 1.2 6.7 2.7 6.7 4.4C6.7 6.2 5.5 7.6 3.4 7.6H1.1L7.2 13.6"/></svg><span class="t" style="left:1363.81px;top:553.15px;font-size:13px;line-height:18px;font-weight:400;color:#e9585c;letter-spacing:-0.327px;">14,830.00</span>
<div class="abs" style="left:309px;top:595px;width:1135px;height:42.6px;background:#f8f8f8"></div>
<div class="abs" style="left:309px;top:637.2px;width:1135px;height:1px;background:#e6e6e6"></div>
<div class="abs" style="left:309px;top:680.4px;width:1135px;height:42px;background:#f9f9f9"></div>
<div class="abs" style="left:457.9px;top:595px;width:1px;height:127.6px;background:#e8e8e8"></div>
<div class="abs" style="left:615px;top:595px;width:1px;height:127.6px;background:#e8e8e8"></div>
<div class="abs" style="left:771.1px;top:595px;width:1px;height:127.6px;background:#e8e8e8"></div>
<div class="abs" style="left:927.7px;top:595px;width:1px;height:127.6px;background:#e8e8e8"></div>
<div class="abs" style="left:1084.2px;top:595px;width:1px;height:127.6px;background:#e8e8e8"></div>
<div class="abs" style="left:1240.9px;top:595px;width:1px;height:127.6px;background:#e8e8e8"></div>
<div class="abs" style="left:1396.8px;top:595px;width:1px;height:127.6px;background:#e8e8e8"></div>
<span class="t" style="left:312.80px;top:607.24px;font-size:12.5px;line-height:18px;font-weight:400;color:#707070;letter-spacing:-0.384px;-webkit-text-stroke:.45px #707070;">PARTY</span>
<svg class="abs" style="left:434.4px;top:610.6px" width="11.2" height="11" viewBox="0 0 11.2 11" fill="none" stroke="#555" stroke-width="1.35" stroke-linejoin="round"><path d="M.7 .7H10.5L6.9 5.3V10.2L4.3 8.6V5.3Z"/></svg>
<span class="t" style="left:470.30px;top:607.24px;font-size:12.5px;line-height:18px;font-weight:400;color:#707070;letter-spacing:0.117px;-webkit-text-stroke:.45px #707070;">Current</span>
<svg class="abs" style="left:590.8px;top:610.6px" width="11.2" height="11" viewBox="0 0 11.2 11" fill="none" stroke="#555" stroke-width="1.35" stroke-linejoin="round"><path d="M.7 .7H10.5L6.9 5.3V10.2L4.3 8.6V5.3Z"/></svg>
<span class="t" style="left:627.00px;top:607.24px;font-size:12.5px;line-height:18px;font-weight:400;color:#707070;letter-spacing:0.014px;-webkit-text-stroke:.45px #707070;">1-30 Days</span>
<svg class="abs" style="left:747.2px;top:610.6px" width="11.2" height="11" viewBox="0 0 11.2 11" fill="none" stroke="#555" stroke-width="1.35" stroke-linejoin="round"><path d="M.7 .7H10.5L6.9 5.3V10.2L4.3 8.6V5.3Z"/></svg>
<span class="t" style="left:783.00px;top:607.24px;font-size:12.5px;line-height:18px;font-weight:400;color:#707070;letter-spacing:0.088px;-webkit-text-stroke:.45px #707070;">31-45 Days</span>
<svg class="abs" style="left:903.6px;top:610.6px" width="11.2" height="11" viewBox="0 0 11.2 11" fill="none" stroke="#555" stroke-width="1.35" stroke-linejoin="round"><path d="M.7 .7H10.5L6.9 5.3V10.2L4.3 8.6V5.3Z"/></svg>
<span class="t" style="left:939.70px;top:607.24px;font-size:12.5px;line-height:18px;font-weight:400;color:#707070;letter-spacing:0.068px;-webkit-text-stroke:.45px #707070;">46-60 Days</span>
<svg class="abs" style="left:1060.1px;top:610.6px" width="11.2" height="11" viewBox="0 0 11.2 11" fill="none" stroke="#555" stroke-width="1.35" stroke-linejoin="round"><path d="M.7 .7H10.5L6.9 5.3V10.2L4.3 8.6V5.3Z"/></svg>
<span class="t" style="left:1096.10px;top:607.24px;font-size:12.5px;line-height:18px;font-weight:400;color:#707070;letter-spacing:-0.118px;-webkit-text-stroke:.45px #707070;">Over 60 Days</span>
<svg class="abs" style="left:1216.6px;top:610.6px" width="11.2" height="11" viewBox="0 0 11.2 11" fill="none" stroke="#555" stroke-width="1.35" stroke-linejoin="round"><path d="M.7 .7H10.5L6.9 5.3V10.2L4.3 8.6V5.3Z"/></svg>
<span class="t" style="left:1253.30px;top:607.24px;font-size:12.5px;line-height:18px;font-weight:400;color:#707070;letter-spacing:0.219px;-webkit-text-stroke:.45px #707070;">Total</span>
<svg class="abs" style="left:1372.8px;top:610.6px" width="11.2" height="11" viewBox="0 0 11.2 11" fill="none" stroke="#555" stroke-width="1.35" stroke-linejoin="round"><path d="M.7 .7H10.5L6.9 5.3V10.2L4.3 8.6V5.3Z"/></svg>
<span class="t" style="left:313.50px;top:650.47px;font-size:14.5px;line-height:20px;font-weight:400;color:#3a3a3a;letter-spacing:-0.667px;">Ved</span>
<span class="t" style="left:313.50px;top:692.57px;font-size:14.5px;line-height:20px;font-weight:400;color:#3a3a3a;letter-spacing:-0.565px;">Yashas</span>
<svg class="abs" style="left:470.60px;top:654.81px" width="6.70" height="10.98" viewBox="0.4 0.5 8.8 13.4" fill="none" stroke="#3a3a3a" stroke-width="1.59233" stroke-linecap="butt" stroke-linejoin="miter"><path d="M0.8 1.2H9M0.8 4.4H9M0.8 1.2H3.4C5.6 1.2 6.7 2.7 6.7 4.4C6.7 6.2 5.5 7.6 3.4 7.6H1.1L7.2 13.6"/></svg><span class="t" style="left:481.65px;top:650.47px;font-size:14.5px;line-height:20px;font-weight:400;color:#3a3a3a;letter-spacing:-0.517px;">0.00</span>
<svg class="abs" style="left:470.60px;top:696.91px" width="6.70" height="10.98" viewBox="0.4 0.5 8.8 13.4" fill="none" stroke="#3a3a3a" stroke-width="1.59233" stroke-linecap="butt" stroke-linejoin="miter"><path d="M0.8 1.2H9M0.8 4.4H9M0.8 1.2H3.4C5.6 1.2 6.7 2.7 6.7 4.4C6.7 6.2 5.5 7.6 3.4 7.6H1.1L7.2 13.6"/></svg><span class="t" style="left:481.65px;top:692.57px;font-size:14.5px;line-height:20px;font-weight:400;color:#3a3a3a;letter-spacing:-0.517px;">0.00</span>
<svg class="abs" style="left:627.00px;top:654.81px" width="6.70" height="10.98" viewBox="0.4 0.5 8.8 13.4" fill="none" stroke="#3a3a3a" stroke-width="1.59233" stroke-linecap="butt" stroke-linejoin="miter"><path d="M0.8 1.2H9M0.8 4.4H9M0.8 1.2H3.4C5.6 1.2 6.7 2.7 6.7 4.4C6.7 6.2 5.5 7.6 3.4 7.6H1.1L7.2 13.6"/></svg><span class="t" style="left:638.05px;top:650.47px;font-size:14.5px;line-height:20px;font-weight:400;color:#3a3a3a;letter-spacing:-0.517px;">0.00</span>
<svg class="abs" style="left:627.00px;top:696.91px" width="6.70" height="10.98" viewBox="0.4 0.5 8.8 13.4" fill="none" stroke="#3a3a3a" stroke-width="1.59233" stroke-linecap="butt" stroke-linejoin="miter"><path d="M0.8 1.2H9M0.8 4.4H9M0.8 1.2H3.4C5.6 1.2 6.7 2.7 6.7 4.4C6.7 6.2 5.5 7.6 3.4 7.6H1.1L7.2 13.6"/></svg><span class="t" style="left:638.05px;top:692.57px;font-size:14.5px;line-height:20px;font-weight:400;color:#3a3a3a;letter-spacing:-0.506px;">12,000.00</span>
<svg class="abs" style="left:783.50px;top:654.81px" width="6.70" height="10.98" viewBox="0.4 0.5 8.8 13.4" fill="none" stroke="#3a3a3a" stroke-width="1.59233" stroke-linecap="butt" stroke-linejoin="miter"><path d="M0.8 1.2H9M0.8 4.4H9M0.8 1.2H3.4C5.6 1.2 6.7 2.7 6.7 4.4C6.7 6.2 5.5 7.6 3.4 7.6H1.1L7.2 13.6"/></svg><span class="t" style="left:794.55px;top:650.47px;font-size:14.5px;line-height:20px;font-weight:400;color:#3a3a3a;letter-spacing:-0.517px;">0.00</span>
<svg class="abs" style="left:783.50px;top:696.91px" width="6.70" height="10.98" viewBox="0.4 0.5 8.8 13.4" fill="none" stroke="#3a3a3a" stroke-width="1.59233" stroke-linecap="butt" stroke-linejoin="miter"><path d="M0.8 1.2H9M0.8 4.4H9M0.8 1.2H3.4C5.6 1.2 6.7 2.7 6.7 4.4C6.7 6.2 5.5 7.6 3.4 7.6H1.1L7.2 13.6"/></svg><span class="t" style="left:794.55px;top:692.57px;font-size:14.5px;line-height:20px;font-weight:400;color:#3a3a3a;letter-spacing:-0.517px;">0.00</span>
<svg class="abs" style="left:940.20px;top:654.81px" width="6.70" height="10.98" viewBox="0.4 0.5 8.8 13.4" fill="none" stroke="#3a3a3a" stroke-width="1.59233" stroke-linecap="butt" stroke-linejoin="miter"><path d="M0.8 1.2H9M0.8 4.4H9M0.8 1.2H3.4C5.6 1.2 6.7 2.7 6.7 4.4C6.7 6.2 5.5 7.6 3.4 7.6H1.1L7.2 13.6"/></svg><span class="t" style="left:951.25px;top:650.47px;font-size:14.5px;line-height:20px;font-weight:400;color:#3a3a3a;letter-spacing:-0.517px;">0.00</span>
<svg class="abs" style="left:940.20px;top:696.91px" width="6.70" height="10.98" viewBox="0.4 0.5 8.8 13.4" fill="none" stroke="#3a3a3a" stroke-width="1.59233" stroke-linecap="butt" stroke-linejoin="miter"><path d="M0.8 1.2H9M0.8 4.4H9M0.8 1.2H3.4C5.6 1.2 6.7 2.7 6.7 4.4C6.7 6.2 5.5 7.6 3.4 7.6H1.1L7.2 13.6"/></svg><span class="t" style="left:951.25px;top:692.57px;font-size:14.5px;line-height:20px;font-weight:400;color:#3a3a3a;letter-spacing:-0.517px;">0.00</span>
<svg class="abs" style="left:1096.80px;top:654.81px" width="6.70" height="10.98" viewBox="0.4 0.5 8.8 13.4" fill="none" stroke="#3a3a3a" stroke-width="1.59233" stroke-linecap="butt" stroke-linejoin="miter"><path d="M0.8 1.2H9M0.8 4.4H9M0.8 1.2H3.4C5.6 1.2 6.7 2.7 6.7 4.4C6.7 6.2 5.5 7.6 3.4 7.6H1.1L7.2 13.6"/></svg><span class="t" style="left:1107.85px;top:650.47px;font-size:14.5px;line-height:20px;font-weight:400;color:#3a3a3a;letter-spacing:-0.551px;">36,000.00</span>
<svg class="abs" style="left:1096.80px;top:696.91px" width="6.70" height="10.98" viewBox="0.4 0.5 8.8 13.4" fill="none" stroke="#3a3a3a" stroke-width="1.59233" stroke-linecap="butt" stroke-linejoin="miter"><path d="M0.8 1.2H9M0.8 4.4H9M0.8 1.2H3.4C5.6 1.2 6.7 2.7 6.7 4.4C6.7 6.2 5.5 7.6 3.4 7.6H1.1L7.2 13.6"/></svg><span class="t" style="left:1107.85px;top:692.57px;font-size:14.5px;line-height:20px;font-weight:400;color:#3a3a3a;letter-spacing:-0.551px;">17,810.00</span>
<svg class="abs" style="left:1253.30px;top:654.81px" width="6.70" height="10.98" viewBox="0.4 0.5 8.8 13.4" fill="none" stroke="#3a3a3a" stroke-width="1.59233" stroke-linecap="butt" stroke-linejoin="miter"><path d="M0.8 1.2H9M0.8 4.4H9M0.8 1.2H3.4C5.6 1.2 6.7 2.7 6.7 4.4C6.7 6.2 5.5 7.6 3.4 7.6H1.1L7.2 13.6"/></svg><span class="t" style="left:1264.35px;top:650.47px;font-size:14.5px;line-height:20px;font-weight:400;color:#3a3a3a;letter-spacing:-0.551px;">36,000.00</span>
<svg class="abs" style="left:1253.30px;top:696.91px" width="6.70" height="10.98" viewBox="0.4 0.5 8.8 13.4" fill="none" stroke="#3a3a3a" stroke-width="1.59233" stroke-linecap="butt" stroke-linejoin="miter"><path d="M0.8 1.2H9M0.8 4.4H9M0.8 1.2H3.4C5.6 1.2 6.7 2.7 6.7 4.4C6.7 6.2 5.5 7.6 3.4 7.6H1.1L7.2 13.6"/></svg><span class="t" style="left:1264.35px;top:692.57px;font-size:14.5px;line-height:20px;font-weight:400;color:#3a3a3a;letter-spacing:-0.551px;">29,810.00</span>
<svg class="abs" style="left:1418px;top:653.9px" width="8.4" height="12.8" viewBox="0 0 8.4 12.8" fill="none" stroke="#2a86f7" stroke-width="2.1"><path d="M1 .9L6.9 6.4L1 11.9"/></svg>
<svg class="abs" style="left:1418px;top:696.1px" width="8.4" height="12.8" viewBox="0 0 8.4 12.8" fill="none" stroke="#2a86f7" stroke-width="2.1"><path d="M1 .9L6.9 6.4L1 11.9"/></svg>
</div></div>
</div>
</body></html>
